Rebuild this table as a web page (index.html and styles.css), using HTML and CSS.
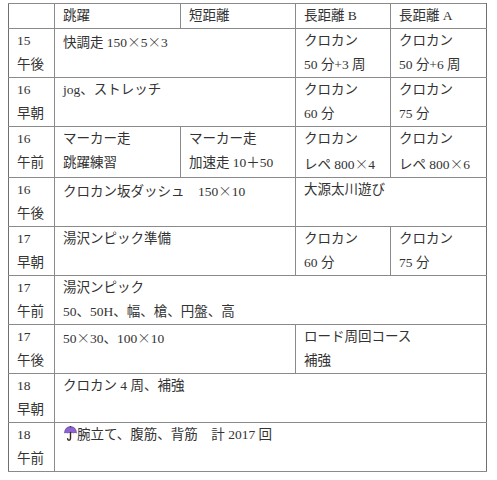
FILE: index.html
```html
<!DOCTYPE html>
<html lang="ja">
<head>
<meta charset="utf-8">
<link rel="stylesheet" href="styles.css">
</head>
<body>
<table class="plan">
  <colgroup>
    <col class="c-day"><col class="c-jump"><col class="c-short"><col class="c-b"><col class="c-a">
  </colgroup>
  <tr>
    <td></td><td>跳躍</td><td>短距離</td><td>長距離 B</td><td>長距離 A</td>
  </tr>
  <tr>
    <td>15<br>午後</td>
    <td colspan="2">快調走 150<span class="j">×</span>5<span class="j">×</span>3</td>
    <td>クロカン<br>50 分+3 周</td>
    <td>クロカン<br>50 分+6 周</td>
  </tr>
  <tr>
    <td>16<br>早朝</td>
    <td colspan="2">jog、ストレッチ</td>
    <td>クロカン<br>60 分</td>
    <td>クロカン<br>75 分</td>
  </tr>
  <tr>
    <td>16<br>午前</td>
    <td>マーカー走<br>跳躍練習</td>
    <td>マーカー走<br>加速走 10＋50</td>
    <td>クロカン<br>レペ 800<span class="j">×</span>4</td>
    <td>クロカン<br>レペ 800<span class="j">×</span>6</td>
  </tr>
  <tr>
    <td>16<br>午後</td>
    <td colspan="2">クロカン坂ダッシュ　150<span class="j">×</span>10</td>
    <td colspan="2">大源太川遊び</td>
  </tr>
  <tr>
    <td>17<br>早朝</td>
    <td colspan="2">湯沢ンピック準備</td>
    <td>クロカン<br>60 分</td>
    <td>クロカン<br>75 分</td>
  </tr>
  <tr>
    <td>17<br>午前</td>
    <td colspan="4">湯沢ンピック<br>50、50H、幅、槍、円盤、高</td>
  </tr>
  <tr>
    <td>17<br>午後</td>
    <td colspan="2">50<span class="j">×</span>30、100<span class="j">×</span>10</td>
    <td colspan="2">ロード周回コース<br>補強</td>
  </tr>
  <tr>
    <td>18<br>早朝</td>
    <td colspan="4">クロカン 4 周、補強</td>
  </tr>
  <tr>
    <td>18<br>午前</td>
    <td colspan="4"><svg class="umbrella" width="13" height="15" viewBox="0 0 13 15"><path d="M0.5 7 Q0.8 0.8 6.5 0.6 Q12.2 0.8 12.5 7 Q11 5.8 9.5 7 Q8 5.8 6.5 7 Q5 5.8 3.5 7 Q2 5.8 0.5 7 Z" fill="#8e63d2" stroke="#5b3a9a" stroke-width="0.6"/><path d="M6.5 6.5 V12.6 Q6.5 14.2 5 14.2 Q3.6 14.2 3.6 12.8" fill="none" stroke="#3a2a1c" stroke-width="1.4" stroke-linecap="round"/><circle cx="6.5" cy="0.7" r="0.7" fill="#3a2a1c"/></svg>腕立て、腹筋、背筋　計 2017 回</td>
  </tr>
</table>
</body>
</html>
```

FILE: styles.css
```css
html, body {
  background: #ffffff;
}
body {
  margin: 3px 8px;
  font-family: "Liberation Serif", "Noto Sans CJK JP", serif;
  font-size: 13.5px;
  color: #333333;
}
.plan {
  border-collapse: collapse;
  table-layout: fixed;
  width: 478px;
  border: 1px solid #6f6f6f;
}
.c-day { width: 46px; }
.c-jump { width: 126px; }
.c-short { width: 115px; }
.c-b { width: 95px; }
.c-a { width: 96px; }
.plan td {
  border: 1px solid #8a8a8a;
  padding: 0 0 0 8px;
  line-height: 24px;
  height: 48px;
  vertical-align: top;
  white-space: nowrap;
  overflow: hidden;
}
.plan tr:first-child td {
  height: 24px;
}
.plan td:first-child {
  border-left-color: #6f6f6f;
}
.plan td:last-child {
  border-right-color: #6f6f6f;
}
.j {
  font-family: "Noto Sans CJK JP", sans-serif;
  font-weight: 300;
}
.umbrella {
  vertical-align: -2px;
  margin-left: 1px;
}
```
